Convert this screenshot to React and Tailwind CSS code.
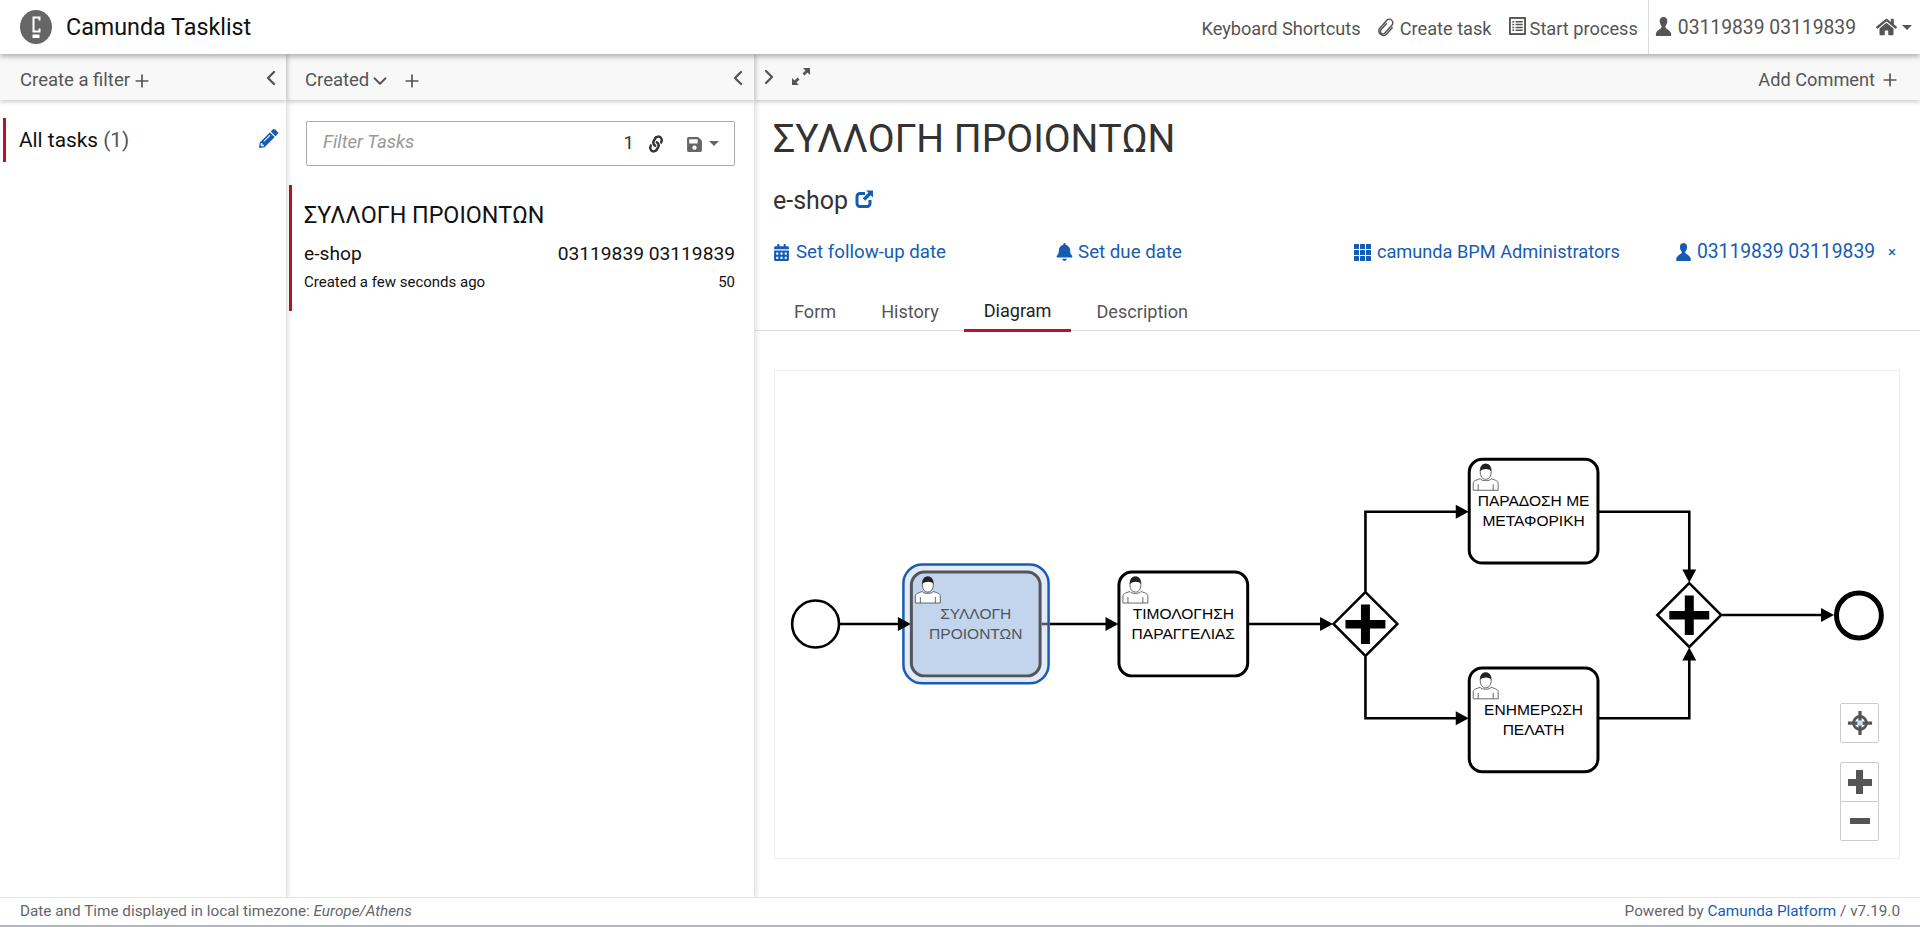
import React from "react";
import { FaHome, FaPencilAlt, FaLink, FaSave, FaCalendarAlt, FaBell } from "react-icons/fa";
import { ChevronLeft, ChevronRight, ChevronDown, Plus } from "lucide-react";

const UserIcon = ({ className }) => (
  <svg viewBox="0 0 20 20" className={className} fill="currentColor">
    <path d="M10 0C7 0 6 2.500 6 4.500c0 2 .8 3.700 1.800 4.800.5.800.2 2-.8 2.700C5 13.300 3 14.500 2 17v3h16v-3c-1-2.500-3-3.700-5-5-1-.7-1.300-1.900-.8-2.700C13.200 8.200 14 6.500 14 4.500 14 2.500 13 0 10 0z" />
  </svg>
);

const GridIcon = ({ className }) => (
  <svg viewBox="0 0 17 17" className={className} fill="currentColor">
    {[0, 6, 12].map(x => [0, 6, 12].map(y => (
      <rect key={`${x}-${y}`} x={x} y={y} width="5" height="5" rx="0.5" />
    )))}
  </svg>
);

const ClipIcon = ({ className }) => (
  <svg viewBox="0 0 20 20" className={className} fill="none" stroke="currentColor" strokeWidth="1.500">
    <g transform="rotate(42 10 10)">
      <path d="M7.500 6v9.500a2.500 2.500 0 0 0 5 0V3.500a3.500 3.500 0 0 0-7 0V15a4.500 4.500 0 0 0 9 0V5" transform="translate(0 0.500) scale(1 0.920)" />
    </g>
  </svg>
);

const ListIcon = ({ className }) => (
  <svg viewBox="0 0 18 19" className={className}>
    <rect width="18" height="19" rx="1" fill="currentColor" />
    <rect x="2" y="2" width="14" height="15" fill="#fff" />
    <path d="M3.500 5h2M7 5h7.500M3.500 8h2M7 8h7.500M3.500 11h2M7 11h7.500M3.500 14h2M7 14h7.500" stroke="currentColor" strokeWidth="1.600" />
  </svg>
);

const OpenIcon = ({ className }) => (
  <svg viewBox="0 0 18 18" className={className} fill="none" stroke="currentColor">
    <path d="M10 3.500H5A3 3 0 0 0 2 6.500v7a3 3 0 0 0 3 3h7a3 3 0 0 0 3-3V10" strokeWidth="3" />
    <path d="M11 0.500h7v7l-2.300-2.300-5.500 5.500-2.400-2.400 5.500-5.500z" fill="currentColor" stroke="none" />
  </svg>
);

const Caret = ({ className }) => (
  <span className={`inline-block w-0 h-0 border-x-[5px] border-x-transparent border-t-[5px] ${className}`} />
);

// user task marker from bpmn-js
const Person = ({ x, y }) => (
  <g transform={`translate(${x} ${y})`} fill="none">
    <path d="M1 27V20c0-2 2-3 7-4.500 1 2.500 10 2.500 11 0 5 1.500 7 2.500 7 4.500v7z" stroke="#444" strokeWidth="0.8" fill="#fff" />
    <path d="M8 8c0 5 2 8 5.500 8s5.500-3 5.500-8-2-7-5.500-7S8 3 8 8z" stroke="#444" strokeWidth="0.8" fill="#fff" />
    <path d="M8 8c0-5 2-7.500 5.500-7.500S19 3 19 8c-2-3-8-3-11 0z" fill="#222" />
    <path d="M6 21v6M21 21v6" stroke="#444" strokeWidth="0.8" />
  </g>
);

const Task = ({ x, y, lines, active }) => (
  <g>
    <rect x={x} y={y} width="129" height="104" rx="13" fill={active ? "#c3d5ec" : "#fff"} stroke={active ? "#52565c" : "#000"} strokeWidth="3" />
    <Person x={x + 3} y={y + 4} />
    {lines.map((l, i) => (
      <text key={l} x={x + 64.500} y={y + 47 + i * 20} textAnchor="middle" fontSize="15.600" fontFamily="'Liberation Sans', sans-serif" fill={active ? "#4d5560" : "#000"}>{l}</text>
    ))}
  </g>
);

const Gateway = ({ cx, cy }) => (
  <g>
    <path d={`M${cx} ${cy - 32}L${cx + 32} ${cy}L${cx} ${cy + 32}L${cx - 32} ${cy}Z`} fill="#fff" stroke="#000" strokeWidth="2.500" />
    <path d={`M${cx - 20} ${cy - 4}h15.500v-15.500h9v15.500h15.500v8.500h-15.500v15.500h-9v-15.500h-15.500z`} fill="#000" />
  </g>
);

const Arrow = ({ x, y, dir }) => {
  const pts = {
    right: `${x},${y} ${x - 13},${y - 7} ${x - 13},${y + 7}`,
    down: `${x},${y} ${x - 7},${y - 13} ${x + 7},${y - 13}`,
    up: `${x},${y} ${x - 7},${y + 13} ${x + 7},${y + 13}`,
  };
  return <polygon points={pts[dir]} fill="#000" />;
};

const Diagram = () => (
  <svg viewBox="774 370 1126 488" className="w-full h-full block">
    <g fill="none" stroke="#000" strokeWidth="2.600">
      <path d="M839 623.500H905" />
      <path d="M1041 623.500H1108" />
      <path d="M1248 623.500H1323" />
      <path d="M1365.500 591V511H1458" />
      <path d="M1365.500 656V718H1458" />
      <path d="M1599 511H1690V572" />
      <path d="M1599 718H1690V657" />
      <path d="M1723 614.500H1828" />
      <circle cx="814.500" cy="623.500" r="23.500" fill="#fff" />
      <circle cx="1860" cy="615" r="22.500" fill="#fff" strokeWidth="5" />
    </g>
    <rect x="902.500" y="564" width="145.500" height="119" rx="19" fill="#e3ebf6" stroke="#1a5cb4" strokeWidth="2.500" />
    <Arrow x={910} y={623.500} dir="right" />
    <Task x={910.500} y={571.500} lines={["ΣΥΛΛΟΓΗ", "ΠΡΟΙΟΝΤΩΝ"]} active />
    <path d="M1041 623.500H1049" stroke="#52565c" strokeWidth="2.600" />
    <Task x={1118.500} y={571.500} lines={["ΤΙΜΟΛΟΓΗΣΗ", "ΠΑΡΑΓΓΕΛΙΑΣ"]} />
    <Task x={1469.500} y={458.500} lines={["ΠΑΡΑΔΟΣΗ ΜΕ", "ΜΕΤΑΦΟΡΙΚΗ"]} />
    <Task x={1469.500} y={667.500} lines={["ΕΝΗΜΕΡΩΣΗ", "ΠΕΛΑΤΗ"]} />
    <Arrow x={1118} y={623.500} dir="right" />
    <Arrow x={1333} y={623.500} dir="right" />
    <Arrow x={1469} y={511} dir="right" />
    <Arrow x={1469} y={718} dir="right" />
    <Arrow x={1690} y={582} dir="down" />
    <Arrow x={1690} y={647} dir="up" />
    <Arrow x={1835} y={614.500} dir="right" />
    <Gateway cx={1365.500} cy={623.500} />
    <Gateway cx={1690} cy={614.500} />
  </svg>
);

export default function App() {
  return (
    <div className="h-screen flex flex-col bg-white text-[#333] overflow-hidden font-['Roboto',sans-serif]">
      <header className="h-[54px] flex items-center bg-white relative z-20 shadow-[0_2px_6px_rgba(0,0,0,0.35)] shrink-0">
        <svg viewBox="0 0 32 34" className="ml-5 w-8 h-[34px]">
          <ellipse cx="16" cy="17" rx="16" ry="17" fill="#666" />
          <path d="M19.500 10.500V7.500h-6v14h6V18.500" fill="none" stroke="#fff" strokeWidth="2" />
          <rect x="12.500" y="24.500" width="7" height="3.500" fill="#fff" />
        </svg>
        <span className="ml-[14px] text-[23.300px] text-[#111]">Camunda Tasklist</span>
        <div className="ml-auto flex items-center h-full text-[18.200px] text-[#555]">
          <div className="flex items-center pt-[3px]">
            <span>Keyboard Shortcuts</span>
            <ClipIcon className="ml-[15px] w-[20px] h-[20px]" />
            <span className="ml-1">Create task</span>
            <ListIcon className="ml-[17px] w-[17px] h-[18px] -translate-y-[2px]" />
            <span className="ml-1">Start process</span>
          </div>
          <div className="ml-[10px] h-full border-l border-[#ddd] flex items-center pl-[5px] pt-[3px]">
            <UserIcon className="w-[19px] h-[19px] -translate-y-[2px]" />
            <span className="ml-[5px] text-[19.300px]">03119839 03119839</span>
          </div>
          <FaHome className="ml-5 w-[21px] h-[20px]" />
          <Caret className="ml-[5px] mr-2 border-t-[#555]" />
        </div>
      </header>

      <main className="flex-1 flex min-h-0">
        <aside className="w-[287px] shrink-0 flex flex-col border-r border-[#e5e5e5] shadow-[2px_0_4px_rgba(0,0,0,0.1)] relative z-10">
          <div className="h-[46px] shrink-0 bg-[#f8f8f8] flex items-center pl-5 pr-[3px] pt-[7px] text-[18.500px] text-[#555] shadow-[0_2px_4px_rgba(0,0,0,0.2)]">
            <span>Create a filter</span>
            <Plus className="ml-[2px] w-[20px] h-[20px]" />
            <ChevronLeft className="ml-auto w-[24px] h-[24px] -translate-y-[3px]" strokeWidth={2.300} />
          </div>
          <div className="mt-[18px] ml-[3px] h-[44px] border-l-[3px] border-[#b5152b] flex items-center pl-[13px] pr-2 text-[20.800px] text-[#111]">
            <span className="translate-y-[1px]">All tasks <span className="text-[#555]">(1)</span></span>
            <FaPencilAlt className="ml-auto w-[19px] h-[19px] text-[#155cb5] -translate-y-[2px]" />
          </div>
        </aside>

        <section className="w-[468px] shrink-0 flex flex-col border-r border-[#e5e5e5] shadow-[2px_0_4px_rgba(0,0,0,0.1)] relative z-[9]">
          <div className="h-[46px] shrink-0 bg-[#f8f8f8] flex items-center pl-[18px] pr-1 pt-[7px] text-[18.500px] text-[#555] shadow-[0_2px_4px_rgba(0,0,0,0.2)]">
            <span>Created</span>
            <ChevronDown className="w-[22px] h-[22px]" />
            <Plus className="ml-[11px] w-[20px] h-[20px]" />
            <ChevronLeft className="ml-auto w-[24px] h-[24px] -translate-y-[3px]" strokeWidth={2.300} />
          </div>
          <div className="mt-[21px] mx-[19px] h-[45px] border border-[#aaa] rounded-[2px] flex items-center pl-4 pr-[15px] shrink-0">
            <span className="italic text-[18.500px] text-[#999] -translate-y-[1px]">Filter Tasks</span>
            <span className="ml-auto text-[18.500px] text-[#333]">1</span>
            <FaLink className="ml-[14px] w-[16px] h-[16px] text-[#333] rotate-[-15deg]" />
            <FaSave className="ml-[22px] w-[17px] h-[17px] text-[#666] translate-y-[1px]" />
            <Caret className="ml-[6px] border-t-[#666]" />
          </div>
          <div className="mt-[19px] ml-[2px] h-[126px] border-l-[3px] border-[#b5152b] pl-[12px] pr-[19px] pt-[16px] text-[#111]">
            <div className="text-[23.300px] leading-7">ΣΥΛΛΟΓΗ ΠΡΟΙΟΝΤΩΝ</div>
            <div className="mt-[13px] flex justify-between text-[19.200px] leading-6">
              <span>e-shop</span>
              <span>03119839 03119839</span>
            </div>
            <div className="mt-[6px] flex justify-between text-[15px] leading-5">
              <span>Created a few seconds ago</span>
              <span>50</span>
            </div>
          </div>
        </section>

        <section className="flex-1 min-w-0 flex flex-col">
          <div className="h-[46px] shrink-0 bg-[#f8f8f8] flex items-center pl-[2px] pr-5 pt-[5px] text-[18.200px] text-[#555] shadow-[0_2px_4px_rgba(0,0,0,0.2)]">
            <ChevronRight className="w-[24px] h-[24px] -translate-y-[3px]" strokeWidth={2.300} />
            <svg viewBox="0 0 20 20" className="ml-[10px] w-[20px] h-[20px] -translate-y-[4px]" fill="currentColor">
              <path d="M12 2h7v7l-2.500-2.500-3 3-2-2 3-3zM1 12v7h7l-2.500-2.500 3-3-2-2-3 3z" />
            </svg>
            <span className="ml-auto">Add Comment</span>
            <Plus className="ml-[5px] w-[20px] h-[20px]" />
          </div>

          <h1 className="mt-[15px] pl-[18px] text-[39px] leading-[48px] text-[#333]">ΣΥΛΛΟΓΗ ΠΡΟΙΟΝΤΩΝ</h1>
          <div className="mt-[22px] pl-[18px] flex items-center text-[25px] leading-8 text-[#333]">
            <span>e-shop</span>
            <OpenIcon className="ml-[7px] w-[18px] h-[18px] text-[#155cb5] -translate-y-[2px]" />
          </div>
          <div className="mt-[23px] pl-[18px] pr-[24px] flex items-center text-[18.700px] leading-6 text-[#155cb5]">
            <FaCalendarAlt className="w-[17px] h-[17px]" />
            <span className="ml-[6px]">Set follow-up date</span>
            <FaBell className="ml-[110px] w-[17px] h-[18px]" />
            <span className="ml-[5px]">Set due date</span>
            <GridIcon className="ml-[172px] w-[17px] h-[17px]" />
            <span className="ml-[6px] text-[18.200px]">camunda BPM Administrators</span>
            <UserIcon className="ml-[54px] w-[19px] h-[18px]" />
            <span className="ml-1 text-[19.300px]">03119839 03119839</span>
            <span className="ml-auto text-[15px]">×</span>
          </div>
          <div className="mt-[32px] h-[35px] pl-[19px] flex gap-[5px] border-b border-[#ddd] text-[18.100px] text-[#555] shrink-0">
            <span className="px-5 h-[35px] pb-1 flex items-center">Form</span>
            <span className="px-5 h-[35px] pb-1 flex items-center">History</span>
            <span className="px-5 h-[36px] pb-1 flex items-center text-[#222] border-b-[3px] border-[#b5152b]">Diagram</span>
            <span className="px-5 h-[35px] pb-1 flex items-center">Description</span>
          </div>
          <div className="mt-[39px] ml-[19px] mr-5 h-[489px] border border-[#eee] relative">
            <Diagram />
            <div className="absolute right-[20px] top-[332px] w-[39px] h-[40px] bg-white border border-[#ccc] rounded-[2px] flex items-center justify-center">
              <svg viewBox="0 0 28 28" className="w-[26px] h-[26px]" fill="none" stroke="#555">
                <circle cx="14" cy="14" r="7" strokeWidth="3" />
                <path d="M14 1v26M1 14h26" strokeWidth="3.500" />
                <circle cx="14" cy="14" r="3" fill="#cfe0f5" stroke="none" />
              </svg>
            </div>
            <div className="absolute right-[20px] top-[391px] w-[39px] h-[40px] bg-white border border-[#ccc] rounded-t-[2px] flex items-center justify-center">
              <span className="w-[24px] h-[24px] bg-[linear-gradient(#555,#555),linear-gradient(#555,#555)] bg-no-repeat bg-center bg-[size:24px_7px,7px_24px]" />
            </div>
            <div className="absolute right-[20px] top-[430px] w-[39px] h-[40px] bg-white border border-[#ccc] rounded-b-[2px] flex items-center justify-center">
              <span className="w-[20px] h-[6px] bg-[#555]" />
            </div>
          </div>
        </section>
      </main>

      <footer className="h-[30px] shrink-0 bg-white border-t border-[#e5e5e5] border-b-2 border-b-[#b0b5bd] flex items-center justify-between px-5 text-[15.300px] text-[#666] relative z-20">
        <span>Date and Time displayed in local timezone: <i>Europe/Athens</i></span>
        <span>Powered by <span className="text-[#155cb5]">Camunda Platform</span> / v7.19.0</span>
      </footer>
    </div>
  );
}
